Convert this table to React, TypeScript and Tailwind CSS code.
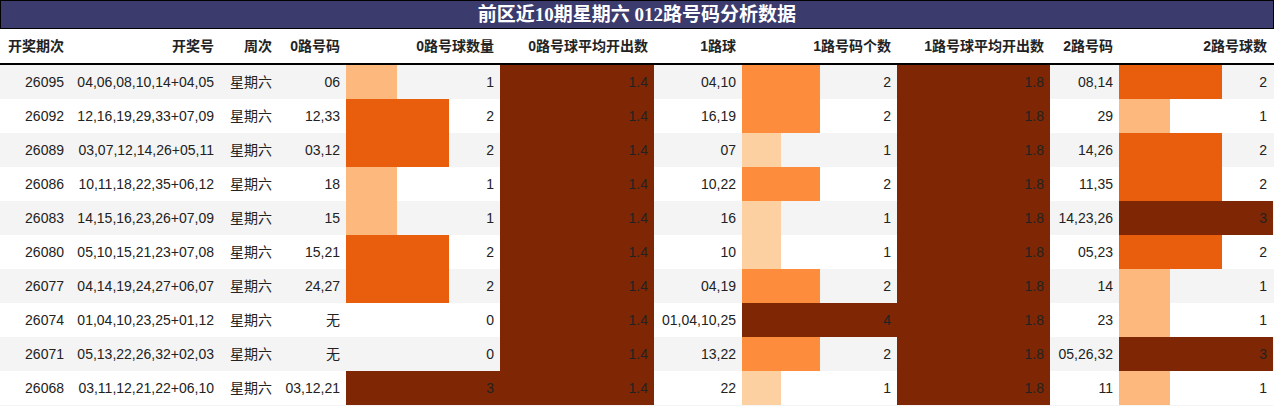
import React from "react";

type Row = {
  id: string;
  nums: string;
  week: string;
  r0: string;
  c0: number;
  r1: string;
  c1: number;
  r2: string;
  c2: number;
};

const rows: Row[] = [
  { id: "26095", nums: "04,06,08,10,14+04,05", week: "星期六", r0: "06", c0: 1, r1: "04,10", c1: 2, r2: "08,14", c2: 2 },
  { id: "26092", nums: "12,16,19,29,33+07,09", week: "星期六", r0: "12,33", c0: 2, r1: "16,19", c1: 2, r2: "29", c2: 1 },
  { id: "26089", nums: "03,07,12,14,26+05,11", week: "星期六", r0: "03,12", c0: 2, r1: "07", c1: 1, r2: "14,26", c2: 2 },
  { id: "26086", nums: "10,11,18,22,35+06,12", week: "星期六", r0: "18", c0: 1, r1: "10,22", c1: 2, r2: "11,35", c2: 2 },
  { id: "26083", nums: "14,15,16,23,26+07,09", week: "星期六", r0: "15", c0: 1, r1: "16", c1: 1, r2: "14,23,26", c2: 3 },
  { id: "26080", nums: "05,10,15,21,23+07,08", week: "星期六", r0: "15,21", c0: 2, r1: "10", c1: 1, r2: "05,23", c2: 2 },
  { id: "26077", nums: "04,14,19,24,27+06,07", week: "星期六", r0: "24,27", c0: 2, r1: "04,19", c1: 2, r2: "14", c2: 1 },
  { id: "26074", nums: "01,04,10,23,25+01,12", week: "星期六", r0: "无", c0: 0, r1: "01,04,10,25", c1: 4, r2: "23", c2: 1 },
  { id: "26071", nums: "05,13,22,26,32+02,03", week: "星期六", r0: "无", c0: 0, r1: "13,22", c1: 2, r2: "05,26,32", c2: 3 },
  { id: "26068", nums: "03,11,12,21,22+06,10", week: "星期六", r0: "03,12,21", c0: 3, r1: "22", c1: 1, r2: "11", c2: 1 },
];

const cls3: Record<number, string> = {
  0: "bg-transparent",
  1: "bg-[#fdb87d]",
  2: "bg-[#e95e0d]",
  3: "bg-[#7f2704]",
};
const cls4: Record<number, string> = {
  0: "bg-transparent",
  1: "bg-[#fdd0a2]",
  2: "bg-[#fd8d3c]",
  3: "bg-[#d94801]",
  4: "bg-[#7f2704]",
};

const grid =
  "grid grid-cols-[70px_150px_58px_68px_154px_154px_88px_155px_153px_69px_154px]";

function Cell({ children }: { children: React.ReactNode }) {
  return <div className="flex items-center justify-end pr-[6px] whitespace-nowrap">{children}</div>;
}

function BarCell({ value, max, color }: { value: number; max: number; color: string }) {
  return (
    <div className="relative flex items-center justify-end pr-[6px]">
      <div className={`absolute left-0 top-0 bottom-0 ${color}`} style={{ width: `${(value / max) * 100}%` }} />
      <span className="relative">{value}</span>
    </div>
  );
}

function DarkCell({ children }: { children: React.ReactNode }) {
  return <div className="flex items-center justify-end pr-[6px] bg-[#7f2704]">{children}</div>;
}

export default function App() {
  const headers = [
    "开奖期次",
    "开奖号",
    "周次",
    "0路号码",
    "0路号球数量",
    "0路号球平均开出数",
    "1路球",
    "1路号码个数",
    "1路号球平均开出数",
    "2路号码",
    "2路号球数",
  ];
  return (
    <div
      className="w-[1274px] h-[406px] bg-white text-[#222] text-[14px] overflow-hidden"
      style={{ fontFamily: '"Liberation Sans", "Noto Sans CJK SC", sans-serif' }}
    >
      <div className="w-[1274px]">
        <div
          className="h-[29px] border border-black bg-[#3c3b6e] text-white font-bold text-[19px] flex items-center justify-center leading-none"
          style={{ fontFamily: '"Liberation Serif", "Noto Sans CJK SC", serif' }}
        >
          前区近10期星期六 012路号码分析数据
        </div>
        <div className={`${grid} h-[36px] border-b-2 border-black font-bold`}>
          {headers.map((h) => (
            <Cell key={h}>{h}</Cell>
          ))}
        </div>
        {rows.map((r, i) => (
          <div
            key={r.id}
            className={`${grid} h-[34px] ${i % 2 === 0 ? "bg-[#f4f4f4]" : "bg-white"}`}
          >
            <Cell>{r.id}</Cell>
            <Cell>{r.nums}</Cell>
            <Cell>{r.week}</Cell>
            <Cell>{r.r0}</Cell>
            <BarCell value={r.c0} max={3} color={cls3[r.c0]} />
            <DarkCell>1.4</DarkCell>
            <Cell>{r.r1}</Cell>
            <BarCell value={r.c1} max={4} color={cls4[r.c1]} />
            <DarkCell>1.8</DarkCell>
            <Cell>{r.r2}</Cell>
            <BarCell value={r.c2} max={3} color={cls3[r.c2]} />
          </div>
        ))}
        <div className="h-px w-[1273px] bg-[#f4f4f4]" />
      </div>
    </div>
  );
}
